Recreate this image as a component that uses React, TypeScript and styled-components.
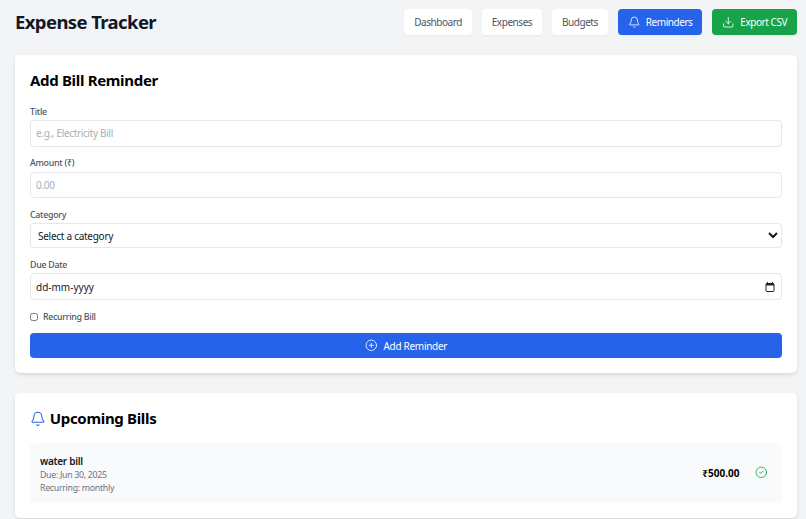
import * as React from 'react';
import styled, { createGlobalStyle } from 'styled-components';
import { Bell, CircleCheck, CirclePlus, Download } from 'lucide-react';

const GlobalStyle = createGlobalStyle`
  * {
    box-sizing: border-box;
  }
  html, body {
    margin: 0;
    height: 519px;
    overflow: hidden;
    background: #f3f4f6;
    font-family: "Noto Sans", "Liberation Sans", sans-serif;
  }
`;

const Page = styled.div`
  padding: 9px 9px 0 15px;
`;

const Header = styled.header`
  display: flex;
  align-items: center;
  justify-content: space-between;
  height: 26px;
  margin-bottom: 20px;
`;

const Logo = styled.h1`
  margin: 0;
  font-size: 18.5px;
  line-height: 28px;
  font-weight: 700;
  letter-spacing: -0.6px;
  color: #111827;
`;

const Nav = styled.nav`
  display: flex;
  gap: 9.8px;
`;

const NavButton = styled.button<{ $bg?: string }>`
  display: flex;
  align-items: center;
  gap: 5.5px;
  height: 26px;
  padding: 0 10px;
  border: 0;
  border-radius: 4px;
  background: ${props => props.$bg || '#fff'};
  color: ${props => (props.$bg ? '#fff' : '#4b5563')};
  font: 400 10px "Noto Sans", sans-serif;
  letter-spacing: -0.45px;
  box-shadow: 0 1px 2px rgba(0, 0, 0, 0.05);
`;

const Card = styled.section`
  background: #fff;
  border-radius: 5px;
  padding: 15px;
  margin-bottom: 20px;
  box-shadow: 0 2px 5px -1px rgba(0, 0, 0, 0.12), 0 1px 3px -1px rgba(0, 0, 0, 0.08);
`;

const CardTitle = styled.h2`
  display: flex;
  align-items: center;
  gap: 4px;
  margin: 0 0 13.5px;
  font-size: 15px;
  line-height: 21px;
  font-weight: 700;
  letter-spacing: -0.32px;
  color: #000;
`;

const Field = styled.div`
  margin-bottom: 9.5px;
`;

const Label = styled.label`
  display: block;
  margin-bottom: 1.5px;
  font-size: 8.8px;
  line-height: 14px;
  font-weight: 500;
  letter-spacing: -0.25px;
  color: #4b5563;
`;

const Input = styled.input`
  display: block;
  width: 100%;
  height: 26.5px;
  padding: 0 5px;
  border: 1px solid #e5e7eb;
  border-radius: 4px;
  background: #fff;
  font: 400 10px "Noto Sans", sans-serif;
  letter-spacing: -0.33px;
  &::placeholder {
    color: #a9afb9;
  }
`;

const Select = styled.select`
  display: block;
  width: 100%;
  height: 25px;
  padding: 0 3px;
  border: 1px solid #e5e7eb;
  border-radius: 4px;
  background: #fff;
  color: #111827;
  font: 400 10px "Noto Sans", sans-serif;
  letter-spacing: -0.27px;
`;

const DateBox = styled.div`
  display: flex;
  align-items: center;
  justify-content: space-between;
  height: 27px;
  padding: 0 6px 0 5px;
  border: 1px solid #e5e7eb;
  border-radius: 4px;
  font-size: 10px;
  color: #111827;
`;

const CheckRow = styled.label`
  display: flex;
  align-items: center;
  gap: 5px;
  height: 14px;
  margin: 0 0 9.5px;
  font-size: 8.8px;
  font-weight: 500;
  letter-spacing: -0.27px;
  color: #4b5563;
`;

const Check = styled.input`
  width: 8px;
  height: 8px;
  margin: 0;
`;

const SubmitButton = styled.button`
  display: flex;
  align-items: center;
  justify-content: center;
  gap: 6px;
  width: 100%;
  height: 25px;
  border: 0;
  border-radius: 4px;
  background: #2563eb;
  color: #fff;
  font: 400 10px "Noto Sans", sans-serif;
  letter-spacing: -0.3px;
`;

const BillRow = styled.div`
  display: flex;
  align-items: center;
  justify-content: space-between;
  height: 60px;
  padding: 0 14.5px 0 10px;
  border-radius: 4px;
  background: #f9fafb;
`;

const BillInfo = styled.div`
  padding-top: 4px;
`;

const BillName = styled.div`
  margin-bottom: 1px;
  font-size: 10px;
  line-height: 13px;
  font-weight: 600;
  letter-spacing: -0.3px;
  color: #111827;
`;

const BillMeta = styled.div`
  font-size: 8.8px;
  line-height: 13px;
  letter-spacing: -0.3px;
  color: #6b7280;
`;

const BillRight = styled.div`
  display: flex;
  align-items: center;
  gap: 15.5px;
`;

const Amount = styled.span`
  font-size: 10px;
  font-weight: 700;
  color: #000;
`;

export default function App() {
  return (
    <Page>
      <GlobalStyle />
      <Header>
        <Logo>Expense Tracker</Logo>
        <Nav>
          <NavButton>Dashboard</NavButton>
          <NavButton>Expenses</NavButton>
          <NavButton>Budgets</NavButton>
          <NavButton $bg="#2563eb">
            <Bell size={12.6} strokeWidth={1.6} />
            Reminders
          </NavButton>
          <NavButton $bg="#16a34a">
            <Download size={12.6} strokeWidth={1.6} />
            Export CSV
          </NavButton>
        </Nav>
      </Header>
      <Card>
        <CardTitle>Add Bill Reminder</CardTitle>
        <Field>
          <Label>Title</Label>
          <Input placeholder="e.g., Electricity Bill" />
        </Field>
        <Field>
          <Label>Amount (₹)</Label>
          <Input placeholder="0.00" />
        </Field>
        <Field>
          <Label>Category</Label>
          <Select>
            <option>Select a category</option>
          </Select>
        </Field>
        <Field>
          <Label>Due Date</Label>
          <DateBox>
            dd-mm-yyyy
            <svg width="10" height="10" viewBox="0 0 10 10">
              <path d="M2.5 0v1.5M7.5 0v1.5" stroke="#222" strokeWidth="1" />
              <rect x="1" y="1.5" width="8" height="8" rx="1" fill="none" stroke="#222" />
              <rect x="1" y="1.5" width="8" height="2" fill="#222" />
            </svg>
          </DateBox>
        </Field>
        <CheckRow>
          <Check type="checkbox" />
          Recurring Bill
        </CheckRow>
        <SubmitButton>
          <CirclePlus size={12.6} strokeWidth={1.6} />
          Add Reminder
        </SubmitButton>
      </Card>
      <Card>
        <CardTitle>
          <Bell size={15.75} strokeWidth={1.6} color="#2563eb" />
          Upcoming Bills
        </CardTitle>
        <BillRow>
          <BillInfo>
            <BillName>water bill</BillName>
            <BillMeta>Due: Jun 30, 2025</BillMeta>
            <BillMeta>Recurring: monthly</BillMeta>
          </BillInfo>
          <BillRight>
            <Amount>₹500.00</Amount>
            <CircleCheck size={12.6} strokeWidth={1.6} color="#16a34a" />
          </BillRight>
        </BillRow>
      </Card>
    </Page>
  );
}
